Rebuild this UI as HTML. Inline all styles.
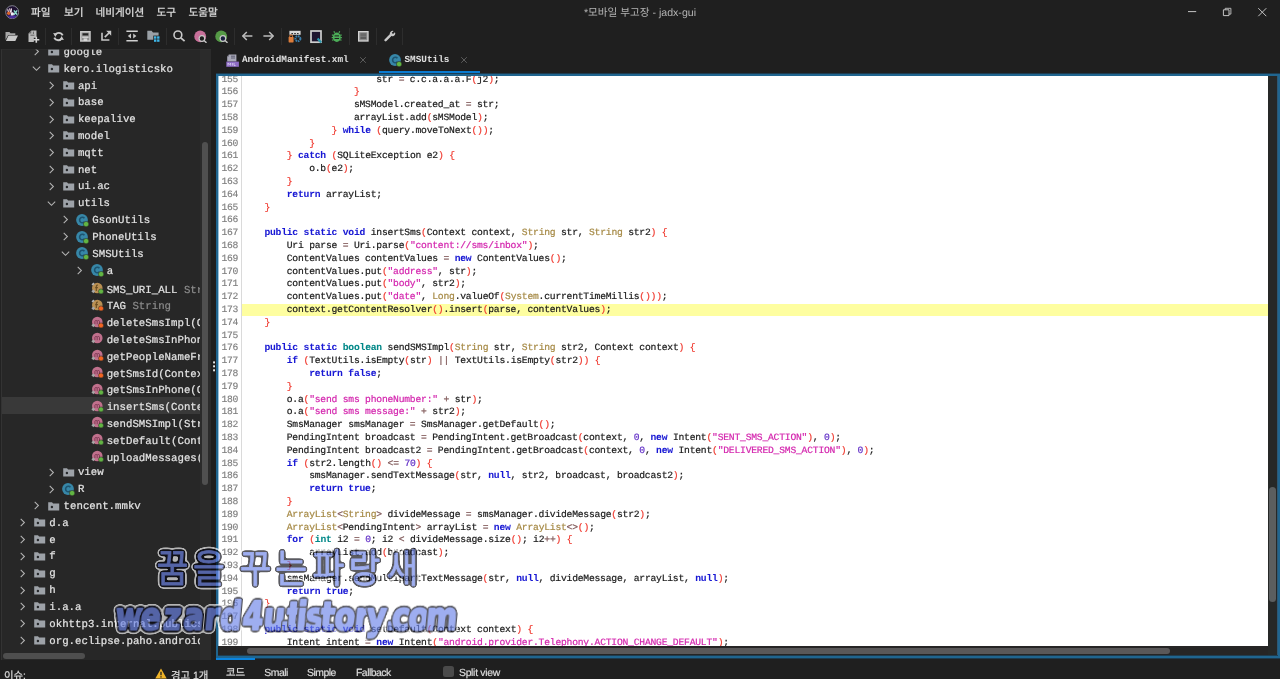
<!DOCTYPE html>
<html lang="ko"><head><meta charset="utf-8"><title>*모바일 부고장 - jadx-gui</title>
<style>
*{box-sizing:border-box}
html,body{margin:0;padding:0;width:1280px;height:679px;overflow:hidden;background:#1f1f1f}
body{position:relative;text-rendering:geometricPrecision;font-family:"Liberation Sans","Noto Sans CJK KR",sans-serif;color:#d4d4d4;-webkit-font-smoothing:antialiased}
.abs{position:absolute}
#menubar span{position:absolute;top:5px;height:16px;line-height:16px;font-size:10.6px;font-weight:500;color:#d4d4d4;white-space:nowrap;-webkit-text-stroke:0.15px #d4d4d4}
#title{position:absolute;left:0;width:1280px;top:5px;height:16px;line-height:16px;text-align:center;font-size:10.6px;color:#b4b4b4;white-space:nowrap}
.tsep{position:absolute;top:27.5px;width:1px;height:17px;background:#2d2d2d}
#tree{position:absolute;left:0;top:49px;width:200px;height:611px;background:#272727;overflow:hidden;border-left:1px solid #222}
#treesb{position:absolute;left:200px;top:49px;width:10.6px;height:611px;background:#2b2b2b}
.lb{position:absolute;white-space:pre;font-family:"Liberation Mono",monospace;font-size:10.72px;line-height:12px;height:12px;color:#e2e2e2;-webkit-text-stroke:0.22px #e2e2e2}
.lb .g{color:#8c8c8c;-webkit-text-stroke:0.2px #8c8c8c}
.sel{background:#393939}
#editor{position:absolute;left:216px;top:73.4px;width:1064px;height:583.5px;background:#1e6a9b}
#white{position:absolute;left:219px;top:76px;width:1049px;height:570px;background:#fff;overflow:hidden}
#gutline{position:absolute;left:241px;top:76px;width:1px;height:570px;background:#dadada}
.ln{position:absolute;left:218.5px;width:19.7px;text-align:right;font-family:"Liberation Mono",monospace;font-size:9.7px;letter-spacing:-0.219px;color:#7e7e7e;white-space:pre;-webkit-text-stroke:0.15px}
.cl{position:absolute;left:242.0px;white-space:pre;font-family:"Liberation Mono",monospace;font-size:9.7px;letter-spacing:-0.2186px;color:#1a1a1a;-webkit-text-stroke:0.2px}
.cl i{font-style:normal}
.cl b{font-weight:bold;-webkit-text-stroke:0.05px}
.k{color:#1818d4}.t{color:#008888}.c{color:#a68a46}.s{color:#d426ae}.n{color:#6432c8}.p{color:#f03c32}.o{color:#7d5555}
.tab{position:absolute;top:50px;height:20px;line-height:20px;font-family:"Liberation Mono",monospace;font-weight:bold;font-size:9.37px;color:#e0e0e0;white-space:pre}
.btab{position:absolute;top:665.4px;height:18px;line-height:18px;font-size:10.4px;color:#dcdcdc;white-space:nowrap;-webkit-text-stroke:0.2px #dcdcdc}
.lat{letter-spacing:-0.5px}
.wm{position:absolute;white-space:nowrap;pointer-events:none}
</style></head><body>
<div id="app" style="position:absolute;left:0;top:0;width:1280px;height:679px;overflow:hidden;will-change:transform">

<div id="titlebar" class="abs" style="left:0;top:0;width:1280px;height:26px;background:#1f1f1f"></div>
<svg class="abs" style="left:5px;top:4.700px" width="14.400" height="14.400" viewBox="0 0 14.400 14.400"><circle cx="7.200" cy="7.200" r="6.500" fill="#1d1030" stroke="#8e8e9c" stroke-width="0.900"/><path d="M2.300 10.600a5.600 5.600 0 0 0 9.800 0z" fill="#4a2f9e"/><path d="M2.600 4.200l1.300 3.800M4.600 3.300l.900 4.300M6.500 3.400l-.300 3.600" stroke="#f1dfe8" stroke-width="1.100" fill="none"/><circle cx="3.700" cy="8.300" r="1.700" fill="#e0662c"/><path d="M5.800 7.200h1.600a1.700 1.700 0 0 1 0 3.400H5.800z" fill="#f2ecf8"/><path d="M8.900 5.400l3.300 4.400M12.200 5.400l-3.300 4.400" stroke="#8fe0cf" stroke-width="1.400"/></svg>
<div id="menubar">
<span style="left:31px">파일</span>
<span style="left:64px">보기</span>
<span style="left:95.5px">네비게이션</span>
<span style="left:156.5px">도구</span>
<span style="left:188.5px">도움말</span>
</div>
<div id="title">*모바일 부고장 - jadx-gui</div>
<svg class="abs" style="left:1180px;top:0" width="100" height="26" viewBox="0 0 100 26"><path d="M8 11.600h8.200" stroke="#c4c4c4" stroke-width="1"/><path d="M43.400 9.800h5.600v5.800h-5.600z" fill="none" stroke="#c4c4c4" stroke-width="1"/><path d="M45.200 9.800v-1.500h5.700v5.800h-1.900" fill="none" stroke="#c4c4c4" stroke-width="0.900"/><path d="M78.300 8.200l8 8M86.300 8.200l-8 8" stroke="#c4c4c4" stroke-width="1"/></svg>
<div class="tsep" style="left:45.0px"></div>
<div class="tsep" style="left:70.9px"></div>
<div class="tsep" style="left:117.9px"></div>
<div class="tsep" style="left:166.0px"></div>
<div class="tsep" style="left:233.9px"></div>
<div class="tsep" style="left:280.9px"></div>
<div class="tsep" style="left:349.0px"></div>
<div class="tsep" style="left:375.5px"></div>
<div class="tsep" style="left:401.5px"></div>
<svg class="abs" style="left:5px;top:30px" width="14" height="12" viewBox="0 0 14 12"><path d="M0.5 2h4l1 1.300h4.800v1.600H3.200L0.500 10z" fill="#a8a8a8"/><path d="M3.500 5.600H13L10.300 11H0.900z" fill="#c8c8c8"/></svg>
<svg class="abs" style="left:27.5px;top:29.5px" width="12" height="14" viewBox="0 0 12 14"><path d="M3.500 0.500h5v7.200H5.800v4.200H0.500V3.600z" fill="#bcbcbc"/><path d="M3.300 0.700L0.700 3.400h2.600z" fill="#6a6a6a"/><path d="M5.400 1.600v2.400M2.400 5.200h4" stroke="#5a5a5a" stroke-width="0.900"/><path d="M8.300 6.800v6M5.300 9.800h6" stroke="#d4d4d4" stroke-width="1.600"/></svg>
<svg class="abs" style="left:53px;top:30.5px" width="11" height="11" viewBox="0 0 11 11"><path d="M9.700 4.300A4.300 4.300 0 0 0 2 4.300M1.300 6.700a4.300 4.300 0 0 0 7.700 .300" fill="none" stroke="#c8c8c8" stroke-width="1.900"/><path d="M0.100 2.100l4 .300-1.700 3.600z M10.900 8.900l-4-.300 1.700-3.600z" fill="#c8c8c8"/></svg>
<svg class="abs" style="left:79.5px;top:30.5px" width="11" height="11" viewBox="0 0 11 11"><path d="M0.800 0.700h9.200v9.300H0.800z" fill="#8c8c8c" stroke="#c8c8c8" stroke-width="1.500"/><path d="M2.600 2.300h5.600v2.100H2.600z" fill="#262626"/><path d="M3.600 7.400h3.600v2.600H3.600z" fill="#d6d6d6"/><path d="M2.200 5.400h6.400v1.600H2.200z" fill="#cfcfcf"/></svg>
<svg class="abs" style="left:100.5px;top:29.8px" width="11" height="11" viewBox="0 0 11 11"><path d="M1 2.800v7.200h7.400" fill="none" stroke="#c8c8c8" stroke-width="1.600"/><path d="M3.800 7.200L9 2" stroke="#c8c8c8" stroke-width="1.700"/><path d="M5.200 0.800h5v5z" fill="#c8c8c8"/></svg>
<svg class="abs" style="left:126px;top:30px" width="12.2" height="12" viewBox="0 0 12.2 12"><path d="M0.400 1.300h11.400M0.400 10.700h11.400" stroke="#d0d0d0" stroke-width="1.500"/><path d="M5 3.600v4.800L1.800 6z M7.200 3.600v4.800L10.400 6z" fill="#c8c8c8"/></svg>
<svg class="abs" style="left:147px;top:29.8px" width="13" height="13" viewBox="0 0 13 13"><path d="M0.300 0.800h4.300l1.400 1.800h5.600v7.200H0.300z" fill="#9aa0a6"/><rect x="6.300" y="5.600" width="6.600" height="6.800" fill="#1f1f1f"/><rect x="7" y="6.300" width="2.400" height="2.400" fill="#3fb6e8"/><rect x="10.100" y="6.300" width="2.400" height="2.400" fill="#3fb6e8"/><rect x="7" y="9.400" width="2.400" height="2.400" fill="#3fb6e8"/><rect x="10.100" y="9.400" width="2.400" height="2.400" fill="#3fb6e8"/></svg>
<svg class="abs" style="left:173px;top:30px" width="12.5" height="12.5" viewBox="0 0 12.5 12.5"><circle cx="4.900" cy="4.900" r="3.900" fill="none" stroke="#c8c8c8" stroke-width="1.600"/><path d="M7.800 7.800l3.800 3.400" stroke="#c8c8c8" stroke-width="1.800"/></svg>
<svg class="abs" style="left:194px;top:29.5px" width="13.5" height="13.5" viewBox="0 0 13.5 13.5"><circle cx="6.200" cy="6.400" r="5.900" fill="#c8709a"/><circle cx="7.900" cy="8.500" r="2.800" fill="#1f1f1f" stroke="#c8c8c8" stroke-width="1.200"/><path d="M10 10.500l2.500 2.300" stroke="#c8c8c8" stroke-width="1.400"/></svg>
<svg class="abs" style="left:215px;top:29.5px" width="13.5" height="13.5" viewBox="0 0 13.5 13.5"><circle cx="6.200" cy="6.400" r="5.900" fill="#559a46"/><circle cx="7.900" cy="8.500" r="2.800" fill="#1a2240" stroke="#c8c8c8" stroke-width="1.200"/><path d="M10 10.500l2.500 2.300" stroke="#c8c8c8" stroke-width="1.400"/></svg>
<svg class="abs" style="left:242px;top:31px" width="11" height="10" viewBox="0 0 11 10"><path d="M0.800 5h9.600" stroke="#bcbcbc" stroke-width="1.500"/><path d="M4.800 1L0.900 5l3.900 4" fill="none" stroke="#bcbcbc" stroke-width="1.500"/></svg>
<svg class="abs" style="left:262.5px;top:31px" width="11" height="10" viewBox="0 0 11 10"><path d="M0.400 5h9.600" stroke="#bcbcbc" stroke-width="1.500"/><path d="M6.200 1l3.900 4-3.900 4" fill="none" stroke="#bcbcbc" stroke-width="1.500"/></svg>
<svg class="abs" style="left:287.5px;top:30px" width="14" height="13" viewBox="0 0 14 13"><rect x="1.400" y="0.800" width="11.200" height="4" fill="#d8d8d8"/><path d="M3.400 3.600h1.600M6.200 3.600h1.600M9 3.600h1.600" stroke="#1f1f1f" stroke-width="1"/><rect x="0.600" y="7" width="5" height="5.400" rx="0.600" fill="#dc7c3a"/><path d="M1.700 7.400V6.200a1.400 1.400 0 0 1 2.800 0v1.200" fill="none" stroke="#dc7c3a" stroke-width="1"/><circle cx="9.900" cy="8.700" r="2.500" fill="none" stroke="#3a7fae" stroke-width="2" stroke-dasharray="1.600 0.700"/></svg>
<svg class="abs" style="left:309.5px;top:29.5px" width="13" height="14" viewBox="0 0 13 14"><rect x="1" y="1" width="10" height="11.200" fill="#1e1630" stroke="#cfcfcf" stroke-width="1.700"/><path d="M7.600 8.600l3.600 3.800" stroke="#2d9ab0" stroke-width="2.200"/></svg>
<svg class="abs" style="left:330.5px;top:30px" width="12" height="13" viewBox="0 0 12 13"><ellipse cx="5.800" cy="7.300" rx="4" ry="4.700" fill="#4cae58"/><path d="M3.600 2.800L2.900 1.200M8 2.800l.700-1.600M0.900 5.200h1.500M9.200 5.200h1.500M0.700 7.600h1.500M9.400 7.600h1.500M1.100 10.300l1.500-.600M10.500 10.300l-1.500-.600" stroke="#4cae58" stroke-width="1.200"/><path d="M3.600 5.900h4.400M3.600 8.500h4.400" stroke="#1f1f1f" stroke-width="1"/></svg>
<svg class="abs" style="left:357.5px;top:30.8px" width="11" height="11" viewBox="0 0 11 11"><rect x="0.600" y="0.600" width="9.400" height="9.400" fill="#8a8a8a" stroke="#d4d4d4" stroke-width="1.300"/><rect x="2.400" y="2.200" width="5.800" height="3.400" fill="#6a6a6a"/><path d="M2.400 7h5.800" stroke="#3a3a3a" stroke-width="1.100"/></svg>
<svg class="abs" style="left:383.5px;top:30px" width="12" height="12" viewBox="0 0 12 12"><path d="M1.600 10.200L6.600 5.200" stroke="#c8c8c8" stroke-width="2.400" stroke-linecap="round"/><path d="M10.900 2.200L9 4.100 7.700 2.800 9.600 0.900A3 3 0 0 0 5.900 4.600 3 3 0 0 0 9.600 6.100 3 3 0 0 0 10.900 2.200z" fill="#c8c8c8"/></svg>
<div id="tree">
<svg class="ch" style="position:absolute;left:31.2px;top:-1.72px" width="9" height="9" viewBox="0 0 9 9"><path d="M2.7 0.9L6.4 4.5 2.7 8.1" fill="none" stroke="#b4b4b4" stroke-width="1.05"/></svg><svg class="ic" style="position:absolute;left:47.3px;top:-1.62px" width="12" height="9" viewBox="0 0 12 9"><path d="M0.2 0.3h3.8l1.1 1.2h6.1v7.1H0.2z" fill="#9da2a8"/><circle cx="3.9" cy="5" r="1.2" fill="#26282b"/></svg><span class="lb" style="left:62.6px;top:-2.12px">google</span>
<svg class="ch" style="position:absolute;left:31.2px;top:15.10px" width="9" height="9" viewBox="0 0 9 9"><path d="M0.8 2.6L4.5 6.3 8.2 2.6" fill="none" stroke="#b4b4b4" stroke-width="1.05"/></svg><svg class="ic" style="position:absolute;left:47.3px;top:15.20px" width="12" height="9" viewBox="0 0 12 9"><path d="M0.2 0.3h3.8l1.1 1.2h6.1v7.1H0.2z" fill="#9da2a8"/><circle cx="3.9" cy="5" r="1.2" fill="#26282b"/></svg><span class="lb" style="left:62.6px;top:14.70px">kero.ilogisticsko</span>
<svg class="ch" style="position:absolute;left:45.5px;top:31.92px" width="9" height="9" viewBox="0 0 9 9"><path d="M2.7 0.9L6.4 4.5 2.7 8.1" fill="none" stroke="#b4b4b4" stroke-width="1.05"/></svg><svg class="ic" style="position:absolute;left:61.6px;top:32.02px" width="12" height="9" viewBox="0 0 12 9"><path d="M0.2 0.3h3.8l1.1 1.2h6.1v7.1H0.2z" fill="#9da2a8"/><circle cx="3.9" cy="5" r="1.2" fill="#26282b"/></svg><span class="lb" style="left:76.9px;top:31.52px">api</span>
<svg class="ch" style="position:absolute;left:45.5px;top:48.74px" width="9" height="9" viewBox="0 0 9 9"><path d="M2.7 0.9L6.4 4.5 2.7 8.1" fill="none" stroke="#b4b4b4" stroke-width="1.05"/></svg><svg class="ic" style="position:absolute;left:61.6px;top:48.84px" width="12" height="9" viewBox="0 0 12 9"><path d="M0.2 0.3h3.8l1.1 1.2h6.1v7.1H0.2z" fill="#9da2a8"/><circle cx="3.9" cy="5" r="1.2" fill="#26282b"/></svg><span class="lb" style="left:76.9px;top:48.34px">base</span>
<svg class="ch" style="position:absolute;left:45.5px;top:65.56px" width="9" height="9" viewBox="0 0 9 9"><path d="M2.7 0.9L6.4 4.5 2.7 8.1" fill="none" stroke="#b4b4b4" stroke-width="1.05"/></svg><svg class="ic" style="position:absolute;left:61.6px;top:65.66px" width="12" height="9" viewBox="0 0 12 9"><path d="M0.2 0.3h3.8l1.1 1.2h6.1v7.1H0.2z" fill="#9da2a8"/><circle cx="3.9" cy="5" r="1.2" fill="#26282b"/></svg><span class="lb" style="left:76.9px;top:65.16px">keepalive</span>
<svg class="ch" style="position:absolute;left:45.5px;top:82.38px" width="9" height="9" viewBox="0 0 9 9"><path d="M2.7 0.9L6.4 4.5 2.7 8.1" fill="none" stroke="#b4b4b4" stroke-width="1.05"/></svg><svg class="ic" style="position:absolute;left:61.6px;top:82.48px" width="12" height="9" viewBox="0 0 12 9"><path d="M0.2 0.3h3.8l1.1 1.2h6.1v7.1H0.2z" fill="#9da2a8"/><circle cx="3.9" cy="5" r="1.2" fill="#26282b"/></svg><span class="lb" style="left:76.9px;top:81.98px">model</span>
<svg class="ch" style="position:absolute;left:45.5px;top:99.20px" width="9" height="9" viewBox="0 0 9 9"><path d="M2.7 0.9L6.4 4.5 2.7 8.1" fill="none" stroke="#b4b4b4" stroke-width="1.05"/></svg><svg class="ic" style="position:absolute;left:61.6px;top:99.30px" width="12" height="9" viewBox="0 0 12 9"><path d="M0.2 0.3h3.8l1.1 1.2h6.1v7.1H0.2z" fill="#9da2a8"/><circle cx="3.9" cy="5" r="1.2" fill="#26282b"/></svg><span class="lb" style="left:76.9px;top:98.80px">mqtt</span>
<svg class="ch" style="position:absolute;left:45.5px;top:116.02px" width="9" height="9" viewBox="0 0 9 9"><path d="M2.7 0.9L6.4 4.5 2.7 8.1" fill="none" stroke="#b4b4b4" stroke-width="1.05"/></svg><svg class="ic" style="position:absolute;left:61.6px;top:116.12px" width="12" height="9" viewBox="0 0 12 9"><path d="M0.2 0.3h3.8l1.1 1.2h6.1v7.1H0.2z" fill="#9da2a8"/><circle cx="3.9" cy="5" r="1.2" fill="#26282b"/></svg><span class="lb" style="left:76.9px;top:115.62px">net</span>
<svg class="ch" style="position:absolute;left:45.5px;top:132.84px" width="9" height="9" viewBox="0 0 9 9"><path d="M2.7 0.9L6.4 4.5 2.7 8.1" fill="none" stroke="#b4b4b4" stroke-width="1.05"/></svg><svg class="ic" style="position:absolute;left:61.6px;top:132.94px" width="12" height="9" viewBox="0 0 12 9"><path d="M0.2 0.3h3.8l1.1 1.2h6.1v7.1H0.2z" fill="#9da2a8"/><circle cx="3.9" cy="5" r="1.2" fill="#26282b"/></svg><span class="lb" style="left:76.9px;top:132.44px">ui.ac</span>
<svg class="ch" style="position:absolute;left:45.5px;top:149.66px" width="9" height="9" viewBox="0 0 9 9"><path d="M0.8 2.6L4.5 6.3 8.2 2.6" fill="none" stroke="#b4b4b4" stroke-width="1.05"/></svg><svg class="ic" style="position:absolute;left:61.6px;top:149.76px" width="12" height="9" viewBox="0 0 12 9"><path d="M0.2 0.3h3.8l1.1 1.2h6.1v7.1H0.2z" fill="#9da2a8"/><circle cx="3.9" cy="5" r="1.2" fill="#26282b"/></svg><span class="lb" style="left:76.9px;top:149.26px">utils</span>
<svg class="ch" style="position:absolute;left:59.9px;top:166.48px" width="9" height="9" viewBox="0 0 9 9"><path d="M2.7 0.9L6.4 4.5 2.7 8.1" fill="none" stroke="#b4b4b4" stroke-width="1.05"/></svg><svg class="ic" style="position:absolute;left:75.3px;top:164.78px" width="13" height="13" viewBox="0 0 13 13"><circle cx="6" cy="6" r="5.900" fill="#3787a8"/><path d="M8.4 4.3A2.7 2.7 0 1 0 8.4 7.7" fill="none" stroke="#1d5470" stroke-width="1.6"/><circle cx="10.1" cy="10.1" r="2.7" fill="#62b543" stroke="#272727" stroke-width="0.5"/></svg><span class="lb" style="left:91.3px;top:166.08px">GsonUtils</span>
<svg class="ch" style="position:absolute;left:59.9px;top:183.30px" width="9" height="9" viewBox="0 0 9 9"><path d="M2.7 0.9L6.4 4.5 2.7 8.1" fill="none" stroke="#b4b4b4" stroke-width="1.05"/></svg><svg class="ic" style="position:absolute;left:75.3px;top:181.60px" width="13" height="13" viewBox="0 0 13 13"><circle cx="6" cy="6" r="5.900" fill="#3787a8"/><path d="M8.4 4.3A2.7 2.7 0 1 0 8.4 7.7" fill="none" stroke="#1d5470" stroke-width="1.6"/><circle cx="10.1" cy="10.1" r="2.7" fill="#62b543" stroke="#272727" stroke-width="0.5"/></svg><span class="lb" style="left:91.3px;top:182.90px">PhoneUtils</span>
<svg class="ch" style="position:absolute;left:59.9px;top:200.12px" width="9" height="9" viewBox="0 0 9 9"><path d="M0.8 2.6L4.5 6.3 8.2 2.6" fill="none" stroke="#b4b4b4" stroke-width="1.05"/></svg><svg class="ic" style="position:absolute;left:75.3px;top:198.42px" width="13" height="13" viewBox="0 0 13 13"><circle cx="6" cy="6" r="5.900" fill="#3787a8"/><path d="M8.4 4.3A2.7 2.7 0 1 0 8.4 7.7" fill="none" stroke="#1d5470" stroke-width="1.6"/><circle cx="10.1" cy="10.1" r="2.7" fill="#62b543" stroke="#272727" stroke-width="0.5"/></svg><span class="lb" style="left:91.3px;top:199.72px">SMSUtils</span>
<svg class="ch" style="position:absolute;left:74.3px;top:216.94px" width="9" height="9" viewBox="0 0 9 9"><path d="M2.7 0.9L6.4 4.5 2.7 8.1" fill="none" stroke="#b4b4b4" stroke-width="1.05"/></svg><svg class="ic" style="position:absolute;left:89.7px;top:215.24px" width="13" height="13" viewBox="0 0 13 13"><circle cx="6" cy="6" r="5.900" fill="#3787a8"/><path d="M8.4 4.3A2.7 2.7 0 1 0 8.4 7.7" fill="none" stroke="#1d5470" stroke-width="1.6"/><circle cx="10.1" cy="10.1" r="2.7" fill="#62b543" stroke="#272727" stroke-width="0.5"/></svg><span class="lb" style="left:105.7px;top:216.54px">a</span>
<svg class="ic" style="position:absolute;left:89.7px;top:232.86px" width="13" height="13" viewBox="0 0 13 13"><circle cx="6.3" cy="6" r="5.3" fill="#b98f52"/><path d="M6.9 3.2c-1.1-.2-1.6.3-1.6 1.3v4.6M4.2 5.6h2.7" fill="none" stroke="#6a4d22" stroke-width="1.1"/><path d="M0.5 2.2l2-1.7 1.2 1.4-2 1.7z" fill="#b8b8b8"/><path d="M2.300 7.400l1.900 1.900-1.900 1.900-1.900-1.900z" fill="#a8a8a8"/><circle cx="10" cy="9.400" r="2.500" fill="#62b543" stroke="#272727" stroke-width="0.500"/></svg><span class="lb" style="left:105.7px;top:235.56px">SMS_URI_ALL<span class="g"> Str</span></span>
<svg class="ic" style="position:absolute;left:89.7px;top:249.68px" width="13" height="13" viewBox="0 0 13 13"><circle cx="6.3" cy="6" r="5.3" fill="#b98f52"/><path d="M6.9 3.2c-1.1-.2-1.6.3-1.6 1.3v4.6M4.2 5.6h2.7" fill="none" stroke="#6a4d22" stroke-width="1.1"/><path d="M0.5 2.2l2-1.7 1.2 1.4-2 1.7z" fill="#b8b8b8"/><path d="M2.300 7.400l1.900 1.900-1.900 1.900-1.900-1.900z" fill="#a8a8a8"/><circle cx="10" cy="9.400" r="2.500" fill="#f26522" stroke="#272727" stroke-width="0.500"/></svg><span class="lb" style="left:105.7px;top:252.38px">TAG<span class="g"> String</span></span>
<svg class="ic" style="position:absolute;left:89.7px;top:266.50px" width="13" height="13" viewBox="0 0 13 13"><circle cx="6.3" cy="6" r="5.3" fill="#c0708c"/><path d="M3.9 8.2V5.3c0-1.1 2.3-1.1 2.3 0v2.9M6.2 5.3c0-1.1 2.3-1.1 2.3 0v2.9" fill="none" stroke="#7a3550" stroke-width="0.9"/><path d="M2.300 7.400l1.900 1.900-1.900 1.900-1.900-1.900z" fill="#a8a8a8"/><circle cx="10" cy="9.400" r="2.500" fill="#f26522" stroke="#272727" stroke-width="0.500"/></svg><span class="lb" style="left:105.7px;top:269.20px">deleteSmsImpl(C</span>
<svg class="ic" style="position:absolute;left:89.7px;top:283.32px" width="13" height="13" viewBox="0 0 13 13"><circle cx="6.3" cy="6" r="5.3" fill="#c0708c"/><path d="M3.9 8.2V5.3c0-1.1 2.3-1.1 2.3 0v2.9M6.2 5.3c0-1.1 2.3-1.1 2.3 0v2.9" fill="none" stroke="#7a3550" stroke-width="0.9"/><path d="M2.300 7.400l1.900 1.900-1.900 1.900-1.900-1.900z" fill="#a8a8a8"/></svg><span class="lb" style="left:105.7px;top:286.02px">deleteSmsInPhon</span>
<svg class="ic" style="position:absolute;left:89.7px;top:300.14px" width="13" height="13" viewBox="0 0 13 13"><circle cx="6.3" cy="6" r="5.3" fill="#c0708c"/><path d="M3.9 8.2V5.3c0-1.1 2.3-1.1 2.3 0v2.9M6.2 5.3c0-1.1 2.3-1.1 2.3 0v2.9" fill="none" stroke="#7a3550" stroke-width="0.9"/><path d="M2.300 7.400l1.900 1.900-1.900 1.900-1.900-1.900z" fill="#a8a8a8"/><circle cx="10" cy="9.400" r="2.500" fill="#f26522" stroke="#272727" stroke-width="0.500"/></svg><span class="lb" style="left:105.7px;top:302.84px">getPeopleNameFr</span>
<svg class="ic" style="position:absolute;left:89.7px;top:316.96px" width="13" height="13" viewBox="0 0 13 13"><circle cx="6.3" cy="6" r="5.3" fill="#c0708c"/><path d="M3.9 8.2V5.3c0-1.1 2.3-1.1 2.3 0v2.9M6.2 5.3c0-1.1 2.3-1.1 2.3 0v2.9" fill="none" stroke="#7a3550" stroke-width="0.9"/><path d="M2.300 7.400l1.900 1.900-1.900 1.900-1.900-1.900z" fill="#a8a8a8"/><circle cx="10" cy="9.400" r="2.500" fill="#f26522" stroke="#272727" stroke-width="0.500"/></svg><span class="lb" style="left:105.7px;top:319.66px">getSmsId(Contex</span>
<svg class="ic" style="position:absolute;left:89.7px;top:333.78px" width="13" height="13" viewBox="0 0 13 13"><circle cx="6.3" cy="6" r="5.3" fill="#c0708c"/><path d="M3.9 8.2V5.3c0-1.1 2.3-1.1 2.3 0v2.9M6.2 5.3c0-1.1 2.3-1.1 2.3 0v2.9" fill="none" stroke="#7a3550" stroke-width="0.9"/><path d="M2.300 7.400l1.900 1.900-1.900 1.900-1.900-1.900z" fill="#a8a8a8"/><circle cx="10" cy="9.400" r="2.500" fill="#62b543" stroke="#272727" stroke-width="0.500"/></svg><span class="lb" style="left:105.7px;top:336.48px">getSmsInPhone(C</span>
<div class="sel" style="position:absolute;left:1px;top:348.20px;width:199px;height:16.8px"></div>
<svg class="ic" style="position:absolute;left:89.7px;top:350.60px" width="13" height="13" viewBox="0 0 13 13"><circle cx="6.3" cy="6" r="5.3" fill="#c0708c"/><path d="M3.9 8.2V5.3c0-1.1 2.3-1.1 2.3 0v2.9M6.2 5.3c0-1.1 2.3-1.1 2.3 0v2.9" fill="none" stroke="#7a3550" stroke-width="0.9"/><path d="M2.300 7.400l1.900 1.900-1.900 1.900-1.900-1.900z" fill="#a8a8a8"/><circle cx="10" cy="9.400" r="2.500" fill="#62b543" stroke="#272727" stroke-width="0.500"/></svg><span class="lb" style="left:105.7px;top:353.30px">insertSms(Conte</span>
<svg class="ic" style="position:absolute;left:89.7px;top:367.42px" width="13" height="13" viewBox="0 0 13 13"><circle cx="6.3" cy="6" r="5.3" fill="#c0708c"/><path d="M3.9 8.2V5.3c0-1.1 2.3-1.1 2.3 0v2.9M6.2 5.3c0-1.1 2.3-1.1 2.3 0v2.9" fill="none" stroke="#7a3550" stroke-width="0.9"/><path d="M2.300 7.400l1.900 1.900-1.900 1.900-1.900-1.900z" fill="#a8a8a8"/><circle cx="10" cy="9.400" r="2.500" fill="#62b543" stroke="#272727" stroke-width="0.500"/></svg><span class="lb" style="left:105.7px;top:370.12px">sendSMSImpl(Str</span>
<svg class="ic" style="position:absolute;left:89.7px;top:384.24px" width="13" height="13" viewBox="0 0 13 13"><circle cx="6.3" cy="6" r="5.3" fill="#c0708c"/><path d="M3.9 8.2V5.3c0-1.1 2.3-1.1 2.3 0v2.9M6.2 5.3c0-1.1 2.3-1.1 2.3 0v2.9" fill="none" stroke="#7a3550" stroke-width="0.9"/><path d="M2.300 7.400l1.900 1.900-1.900 1.900-1.900-1.900z" fill="#a8a8a8"/><circle cx="10" cy="9.400" r="2.500" fill="#62b543" stroke="#272727" stroke-width="0.500"/></svg><span class="lb" style="left:105.7px;top:386.94px">setDefault(Cont</span>
<svg class="ic" style="position:absolute;left:89.7px;top:401.06px" width="13" height="13" viewBox="0 0 13 13"><circle cx="6.3" cy="6" r="5.3" fill="#c0708c"/><path d="M3.9 8.2V5.3c0-1.1 2.3-1.1 2.3 0v2.9M6.2 5.3c0-1.1 2.3-1.1 2.3 0v2.9" fill="none" stroke="#7a3550" stroke-width="0.9"/><path d="M2.300 7.400l1.900 1.900-1.900 1.900-1.900-1.900z" fill="#a8a8a8"/><circle cx="10" cy="9.400" r="2.500" fill="#62b543" stroke="#272727" stroke-width="0.500"/></svg><span class="lb" style="left:105.7px;top:403.76px">uploadMessages(</span>
<svg class="ch" style="position:absolute;left:45.5px;top:418.78px" width="9" height="9" viewBox="0 0 9 9"><path d="M2.7 0.9L6.4 4.5 2.7 8.1" fill="none" stroke="#b4b4b4" stroke-width="1.05"/></svg><svg class="ic" style="position:absolute;left:61.6px;top:418.88px" width="12" height="9" viewBox="0 0 12 9"><path d="M0.2 0.3h3.8l1.1 1.2h6.1v7.1H0.2z" fill="#9da2a8"/><circle cx="3.9" cy="5" r="1.2" fill="#26282b"/></svg><span class="lb" style="left:76.9px;top:418.38px">view</span>
<svg class="ch" style="position:absolute;left:45.5px;top:435.60px" width="9" height="9" viewBox="0 0 9 9"><path d="M2.7 0.9L6.4 4.5 2.7 8.1" fill="none" stroke="#b4b4b4" stroke-width="1.05"/></svg><svg class="ic" style="position:absolute;left:60.9px;top:433.90px" width="13" height="13" viewBox="0 0 13 13"><circle cx="6" cy="6" r="5.900" fill="#3787a8"/><path d="M8.4 4.3A2.7 2.7 0 1 0 8.4 7.7" fill="none" stroke="#1d5470" stroke-width="1.6"/><circle cx="10.1" cy="10.1" r="2.7" fill="#62b543" stroke="#272727" stroke-width="0.5"/></svg><span class="lb" style="left:76.9px;top:435.20px">R</span>
<svg class="ch" style="position:absolute;left:31.2px;top:452.42px" width="9" height="9" viewBox="0 0 9 9"><path d="M2.7 0.9L6.4 4.5 2.7 8.1" fill="none" stroke="#b4b4b4" stroke-width="1.05"/></svg><svg class="ic" style="position:absolute;left:47.3px;top:452.52px" width="12" height="9" viewBox="0 0 12 9"><path d="M0.2 0.3h3.8l1.1 1.2h6.1v7.1H0.2z" fill="#9da2a8"/><circle cx="3.9" cy="5" r="1.2" fill="#26282b"/></svg><span class="lb" style="left:62.6px;top:452.02px">tencent.mmkv</span>
<svg class="ch" style="position:absolute;left:16.9px;top:469.24px" width="9" height="9" viewBox="0 0 9 9"><path d="M2.7 0.9L6.4 4.5 2.7 8.1" fill="none" stroke="#b4b4b4" stroke-width="1.05"/></svg><svg class="ic" style="position:absolute;left:33.0px;top:469.34px" width="12" height="9" viewBox="0 0 12 9"><path d="M0.2 0.3h3.8l1.1 1.2h6.1v7.1H0.2z" fill="#9da2a8"/><circle cx="3.9" cy="5" r="1.2" fill="#26282b"/></svg><span class="lb" style="left:48.3px;top:468.84px">d.a</span>
<svg class="ch" style="position:absolute;left:16.9px;top:486.06px" width="9" height="9" viewBox="0 0 9 9"><path d="M2.7 0.9L6.4 4.5 2.7 8.1" fill="none" stroke="#b4b4b4" stroke-width="1.05"/></svg><svg class="ic" style="position:absolute;left:33.0px;top:486.16px" width="12" height="9" viewBox="0 0 12 9"><path d="M0.2 0.3h3.8l1.1 1.2h6.1v7.1H0.2z" fill="#9da2a8"/><circle cx="3.9" cy="5" r="1.2" fill="#26282b"/></svg><span class="lb" style="left:48.3px;top:485.66px">e</span>
<svg class="ch" style="position:absolute;left:16.9px;top:502.88px" width="9" height="9" viewBox="0 0 9 9"><path d="M2.7 0.9L6.4 4.5 2.7 8.1" fill="none" stroke="#b4b4b4" stroke-width="1.05"/></svg><svg class="ic" style="position:absolute;left:33.0px;top:502.98px" width="12" height="9" viewBox="0 0 12 9"><path d="M0.2 0.3h3.8l1.1 1.2h6.1v7.1H0.2z" fill="#9da2a8"/><circle cx="3.9" cy="5" r="1.2" fill="#26282b"/></svg><span class="lb" style="left:48.3px;top:502.48px">f</span>
<svg class="ch" style="position:absolute;left:16.9px;top:519.70px" width="9" height="9" viewBox="0 0 9 9"><path d="M2.7 0.9L6.4 4.5 2.7 8.1" fill="none" stroke="#b4b4b4" stroke-width="1.05"/></svg><svg class="ic" style="position:absolute;left:33.0px;top:519.80px" width="12" height="9" viewBox="0 0 12 9"><path d="M0.2 0.3h3.8l1.1 1.2h6.1v7.1H0.2z" fill="#9da2a8"/><circle cx="3.9" cy="5" r="1.2" fill="#26282b"/></svg><span class="lb" style="left:48.3px;top:519.30px">g</span>
<svg class="ch" style="position:absolute;left:16.9px;top:536.52px" width="9" height="9" viewBox="0 0 9 9"><path d="M2.7 0.9L6.4 4.5 2.7 8.1" fill="none" stroke="#b4b4b4" stroke-width="1.05"/></svg><svg class="ic" style="position:absolute;left:33.0px;top:536.62px" width="12" height="9" viewBox="0 0 12 9"><path d="M0.2 0.3h3.8l1.1 1.2h6.1v7.1H0.2z" fill="#9da2a8"/><circle cx="3.9" cy="5" r="1.2" fill="#26282b"/></svg><span class="lb" style="left:48.3px;top:536.12px">h</span>
<svg class="ch" style="position:absolute;left:16.9px;top:553.34px" width="9" height="9" viewBox="0 0 9 9"><path d="M2.7 0.9L6.4 4.5 2.7 8.1" fill="none" stroke="#b4b4b4" stroke-width="1.05"/></svg><svg class="ic" style="position:absolute;left:33.0px;top:553.44px" width="12" height="9" viewBox="0 0 12 9"><path d="M0.2 0.3h3.8l1.1 1.2h6.1v7.1H0.2z" fill="#9da2a8"/><circle cx="3.9" cy="5" r="1.2" fill="#26282b"/></svg><span class="lb" style="left:48.3px;top:552.94px">i.a.a</span>
<svg class="ch" style="position:absolute;left:16.9px;top:570.16px" width="9" height="9" viewBox="0 0 9 9"><path d="M2.7 0.9L6.4 4.5 2.7 8.1" fill="none" stroke="#b4b4b4" stroke-width="1.05"/></svg><svg class="ic" style="position:absolute;left:33.0px;top:570.26px" width="12" height="9" viewBox="0 0 12 9"><path d="M0.2 0.3h3.8l1.1 1.2h6.1v7.1H0.2z" fill="#9da2a8"/><circle cx="3.9" cy="5" r="1.2" fill="#26282b"/></svg><span class="lb" style="left:48.3px;top:569.76px">okhttp3.internal.publics</span>
<svg class="ch" style="position:absolute;left:16.9px;top:586.98px" width="9" height="9" viewBox="0 0 9 9"><path d="M2.7 0.9L6.4 4.5 2.7 8.1" fill="none" stroke="#b4b4b4" stroke-width="1.05"/></svg><svg class="ic" style="position:absolute;left:33.0px;top:587.08px" width="12" height="9" viewBox="0 0 12 9"><path d="M0.2 0.3h3.8l1.1 1.2h6.1v7.1H0.2z" fill="#9da2a8"/><circle cx="3.9" cy="5" r="1.2" fill="#26282b"/></svg><span class="lb" style="left:48.3px;top:586.58px">org.eclipse.paho.android</span>
</div>
<div id="treesb"></div>
<div class="abs" style="left:202px;top:142px;width:6px;height:342.700px;border-radius:3px;background:#505050"></div>
<div class="abs" style="left:1px;top:650px;width:199px;height:10px;background:#272727"></div>
<div class="abs" style="left:1px;top:49px;width:1px;height:611px;background:#333"></div>
<div class="abs" style="left:1px;top:49px;width:210px;height:1px;background:#2e2e2e;opacity:.6"></div>
<div class="abs" style="left:3px;top:652.7px;width:82px;height:6.2px;border-radius:3.1px;background:#4e4e4e"></div>
<svg class="abs" style="left:211px;top:358px" width="6" height="16" viewBox="0 0 6 16"><rect x="2.100" y="3.400" width="1.900" height="2" fill="#ececec"/><rect x="2.100" y="7.300" width="1.900" height="2" fill="#ececec"/><rect x="2.100" y="11.300" width="1.900" height="2" fill="#ececec"/></svg>
<svg class="abs" style="left:226px;top:53.5px" width="14" height="14" viewBox="0 0 14 14"><path d="M3 0.6h7.4v7H1.2V2.6z" fill="#a9a9b8"/><path d="M3 0.6L1.2 2.600H3z" fill="#6c6c7c"/><path d="M5 2.200h4M5 4h4" stroke="#55556a" stroke-width="0.9"/><rect x="0.3" y="7.6" width="12.6" height="5.200" fill="#8d6bc4"/><path d="M2 9v2.600M2 9l1.300 1.600L4.600 9v2.600M6.400 9v2.600M8 9v2.600h1.600" stroke="#d9cff0" stroke-width="0.8" fill="none"/></svg>
<div class="tab" style="left:242px">AndroidManifest.xml</div>
<svg class="abs" style="left:358.900px;top:56px" width="8" height="8" viewBox="0 0 8 8"><path d="M1.200 1.200l5.600 5.600M6.800 1.200L1.200 6.800" stroke="#5c5c5c" stroke-width="1"/></svg>
<svg class="abs" style="left:388.500px;top:53.700px" width="13" height="13" viewBox="0 0 13 13"><circle cx="6" cy="6" r="5.900" fill="#3787a8"/><path d="M8.4 4.3A2.7 2.7 0 1 0 8.4 7.7" fill="none" stroke="#1d5470" stroke-width="1.6"/><circle cx="10.1" cy="10.1" r="2.7" fill="#62b543" stroke="#1f1f1f" stroke-width="0.5"/></svg>
<div class="tab" style="left:404.5px">SMSUtils</div>
<svg class="abs" style="left:459.600px;top:56px" width="8" height="8" viewBox="0 0 8 8"><path d="M1.200 1.200l5.600 5.600M6.800 1.200L1.200 6.800" stroke="#5c5c5c" stroke-width="1"/></svg>
<div class="abs" style="left:378.8px;top:70.7px;width:101px;height:3px;background:#0a7bd0"></div>
<div class="abs" style="left:216px;top:73px;width:1064px;height:1px;background:#1d3c50"></div>
<div class="abs" style="left:216px;top:74px;width:1064px;height:584px;background:#20658f"></div>
<div class="abs" style="left:216px;top:658px;width:1064px;height:1px;background:#1d3a4e"></div>
<div class="abs" style="left:218px;top:76px;width:1px;height:579px;background:#9cc3db"></div>
<div id="white"></div>
<div class="abs" style="left:242px;top:304px;width:1026px;height:12px;background:#fefea0"></div>
<div id="gutline"></div>
<div class="abs" style="left:0;top:76px;width:1268px;height:570px;overflow:hidden">
<div class="ln" style="top:-2.45px;height:12.8px;line-height:12.8px">155</div>
<div class="cl" style="top:-2.45px;height:12.8px;line-height:12.8px">                        str <i class="o">=</i> c.c.a.a.a.F<i class="p">(</i>j2<i class="p">)</i>;</div>
<div class="ln" style="top:10.35px;height:12.8px;line-height:12.8px">156</div>
<div class="cl" style="top:10.35px;height:12.8px;line-height:12.8px">                    <i class="p">}</i></div>
<div class="ln" style="top:23.15px;height:12.8px;line-height:12.8px">157</div>
<div class="cl" style="top:23.15px;height:12.8px;line-height:12.8px">                    sMSModel.created_at <i class="o">=</i> str;</div>
<div class="ln" style="top:35.95px;height:12.8px;line-height:12.8px">158</div>
<div class="cl" style="top:35.95px;height:12.8px;line-height:12.8px">                    arrayList.add<i class="p">(</i>sMSModel<i class="p">)</i>;</div>
<div class="ln" style="top:48.75px;height:12.8px;line-height:12.8px">159</div>
<div class="cl" style="top:48.75px;height:12.8px;line-height:12.8px">                <i class="p">}</i> <b class="k">while</b> <i class="p">(</i>query.moveToNext<i class="p">(</i><i class="p">)</i><i class="p">)</i>;</div>
<div class="ln" style="top:61.55px;height:12.8px;line-height:12.8px">160</div>
<div class="cl" style="top:61.55px;height:12.8px;line-height:12.8px">            <i class="p">}</i></div>
<div class="ln" style="top:74.35px;height:12.8px;line-height:12.8px">161</div>
<div class="cl" style="top:74.35px;height:12.8px;line-height:12.8px">        <i class="p">}</i> <b class="k">catch</b> <i class="p">(</i>SQLiteException e2<i class="p">)</i> <i class="p">{</i></div>
<div class="ln" style="top:87.15px;height:12.8px;line-height:12.8px">162</div>
<div class="cl" style="top:87.15px;height:12.8px;line-height:12.8px">            o.b<i class="p">(</i>e2<i class="p">)</i>;</div>
<div class="ln" style="top:99.95px;height:12.8px;line-height:12.8px">163</div>
<div class="cl" style="top:99.95px;height:12.8px;line-height:12.8px">        <i class="p">}</i></div>
<div class="ln" style="top:112.75px;height:12.8px;line-height:12.8px">164</div>
<div class="cl" style="top:112.75px;height:12.8px;line-height:12.8px">        <b class="k">return</b> arrayList;</div>
<div class="ln" style="top:125.55px;height:12.8px;line-height:12.8px">165</div>
<div class="cl" style="top:125.55px;height:12.8px;line-height:12.8px">    <i class="p">}</i></div>
<div class="ln" style="top:138.35px;height:12.8px;line-height:12.8px">166</div>
<div class="ln" style="top:151.15px;height:12.8px;line-height:12.8px">167</div>
<div class="cl" style="top:151.15px;height:12.8px;line-height:12.8px">    <b class="k">public</b> <b class="k">static</b> <b class="k">void</b> insertSms<i class="p">(</i>Context context, <i class="c">String</i> str, <i class="c">String</i> str2<i class="p">)</i> <i class="p">{</i></div>
<div class="ln" style="top:163.95px;height:12.8px;line-height:12.8px">168</div>
<div class="cl" style="top:163.95px;height:12.8px;line-height:12.8px">        Uri parse <i class="o">=</i> Uri.parse<i class="p">(</i><i class="s">"content://sms/inbox"</i><i class="p">)</i>;</div>
<div class="ln" style="top:176.75px;height:12.8px;line-height:12.8px">169</div>
<div class="cl" style="top:176.75px;height:12.8px;line-height:12.8px">        ContentValues contentValues <i class="o">=</i> <b class="k">new</b> ContentValues<i class="p">(</i><i class="p">)</i>;</div>
<div class="ln" style="top:189.55px;height:12.8px;line-height:12.8px">170</div>
<div class="cl" style="top:189.55px;height:12.8px;line-height:12.8px">        contentValues.put<i class="p">(</i><i class="s">"address"</i>, str<i class="p">)</i>;</div>
<div class="ln" style="top:202.35px;height:12.8px;line-height:12.8px">171</div>
<div class="cl" style="top:202.35px;height:12.8px;line-height:12.8px">        contentValues.put<i class="p">(</i><i class="s">"body"</i>, str2<i class="p">)</i>;</div>
<div class="ln" style="top:215.15px;height:12.8px;line-height:12.8px">172</div>
<div class="cl" style="top:215.15px;height:12.8px;line-height:12.8px">        contentValues.put<i class="p">(</i><i class="s">"date"</i>, <i class="c">Long</i>.valueOf<i class="p">(</i><i class="c">System</i>.currentTimeMillis<i class="p">(</i><i class="p">)</i><i class="p">)</i><i class="p">)</i>;</div>
<div class="ln" style="top:227.95px;height:12.8px;line-height:12.8px">173</div>
<div class="cl" style="top:227.95px;height:12.8px;line-height:12.8px">        context.getContentResolver<i class="p">(</i><i class="p">)</i>.insert<i class="p">(</i>parse, contentValues<i class="p">)</i>;</div>
<div class="ln" style="top:240.75px;height:12.8px;line-height:12.8px">174</div>
<div class="cl" style="top:240.75px;height:12.8px;line-height:12.8px">    <i class="p">}</i></div>
<div class="ln" style="top:253.55px;height:12.8px;line-height:12.8px">175</div>
<div class="ln" style="top:266.35px;height:12.8px;line-height:12.8px">176</div>
<div class="cl" style="top:266.35px;height:12.8px;line-height:12.8px">    <b class="k">public</b> <b class="k">static</b> <b class="t">boolean</b> sendSMSImpl<i class="p">(</i><i class="c">String</i> str, <i class="c">String</i> str2, Context context<i class="p">)</i> <i class="p">{</i></div>
<div class="ln" style="top:279.15px;height:12.8px;line-height:12.8px">177</div>
<div class="cl" style="top:279.15px;height:12.8px;line-height:12.8px">        <b class="k">if</b> <i class="p">(</i>TextUtils.isEmpty<i class="p">(</i>str<i class="p">)</i> <i class="o">||</i> TextUtils.isEmpty<i class="p">(</i>str2<i class="p">)</i><i class="p">)</i> <i class="p">{</i></div>
<div class="ln" style="top:291.95px;height:12.8px;line-height:12.8px">178</div>
<div class="cl" style="top:291.95px;height:12.8px;line-height:12.8px">            <b class="k">return</b> <b class="k">false</b>;</div>
<div class="ln" style="top:304.75px;height:12.8px;line-height:12.8px">179</div>
<div class="cl" style="top:304.75px;height:12.8px;line-height:12.8px">        <i class="p">}</i></div>
<div class="ln" style="top:317.55px;height:12.8px;line-height:12.8px">180</div>
<div class="cl" style="top:317.55px;height:12.8px;line-height:12.8px">        o.a<i class="p">(</i><i class="s">"send sms phoneNumber:"</i> <i class="o">+</i> str<i class="p">)</i>;</div>
<div class="ln" style="top:330.35px;height:12.8px;line-height:12.8px">181</div>
<div class="cl" style="top:330.35px;height:12.8px;line-height:12.8px">        o.a<i class="p">(</i><i class="s">"send sms message:"</i> <i class="o">+</i> str2<i class="p">)</i>;</div>
<div class="ln" style="top:343.15px;height:12.8px;line-height:12.8px">182</div>
<div class="cl" style="top:343.15px;height:12.8px;line-height:12.8px">        SmsManager smsManager <i class="o">=</i> SmsManager.getDefault<i class="p">(</i><i class="p">)</i>;</div>
<div class="ln" style="top:355.95px;height:12.8px;line-height:12.8px">183</div>
<div class="cl" style="top:355.95px;height:12.8px;line-height:12.8px">        PendingIntent broadcast <i class="o">=</i> PendingIntent.getBroadcast<i class="p">(</i>context, <i class="n">0</i>, <b class="k">new</b> Intent<i class="p">(</i><i class="s">"SENT_SMS_ACTION"</i><i class="p">)</i>, <i class="n">0</i><i class="p">)</i>;</div>
<div class="ln" style="top:368.75px;height:12.8px;line-height:12.8px">184</div>
<div class="cl" style="top:368.75px;height:12.8px;line-height:12.8px">        PendingIntent broadcast2 <i class="o">=</i> PendingIntent.getBroadcast<i class="p">(</i>context, <i class="n">0</i>, <b class="k">new</b> Intent<i class="p">(</i><i class="s">"DELIVERED_SMS_ACTION"</i><i class="p">)</i>, <i class="n">0</i><i class="p">)</i>;</div>
<div class="ln" style="top:381.55px;height:12.8px;line-height:12.8px">185</div>
<div class="cl" style="top:381.55px;height:12.8px;line-height:12.8px">        <b class="k">if</b> <i class="p">(</i>str2.length<i class="p">(</i><i class="p">)</i> <i class="o">&lt;=</i> <i class="n">70</i><i class="p">)</i> <i class="p">{</i></div>
<div class="ln" style="top:394.35px;height:12.8px;line-height:12.8px">186</div>
<div class="cl" style="top:394.35px;height:12.8px;line-height:12.8px">            smsManager.sendTextMessage<i class="p">(</i>str, <b class="k">null</b>, str2, broadcast, broadcast2<i class="p">)</i>;</div>
<div class="ln" style="top:407.15px;height:12.8px;line-height:12.8px">187</div>
<div class="cl" style="top:407.15px;height:12.8px;line-height:12.8px">            <b class="k">return</b> <b class="k">true</b>;</div>
<div class="ln" style="top:419.95px;height:12.8px;line-height:12.8px">188</div>
<div class="cl" style="top:419.95px;height:12.8px;line-height:12.8px">        <i class="p">}</i></div>
<div class="ln" style="top:432.75px;height:12.8px;line-height:12.8px">189</div>
<div class="cl" style="top:432.75px;height:12.8px;line-height:12.8px">        <i class="c">ArrayList</i><i class="o">&lt;</i><i class="c">String</i><i class="o">&gt;</i> divideMessage <i class="o">=</i> smsManager.divideMessage<i class="p">(</i>str2<i class="p">)</i>;</div>
<div class="ln" style="top:445.55px;height:12.8px;line-height:12.8px">190</div>
<div class="cl" style="top:445.55px;height:12.8px;line-height:12.8px">        <i class="c">ArrayList</i><i class="o">&lt;</i>PendingIntent<i class="o">&gt;</i> arrayList <i class="o">=</i> <b class="k">new</b> <i class="c">ArrayList</i><i class="o">&lt;</i><i class="o">&gt;</i><i class="p">(</i><i class="p">)</i>;</div>
<div class="ln" style="top:458.35px;height:12.8px;line-height:12.8px">191</div>
<div class="cl" style="top:458.35px;height:12.8px;line-height:12.8px">        <b class="k">for</b> <i class="p">(</i><b class="t">int</b> i2 <i class="o">=</i> <i class="n">0</i>; i2 <i class="o">&lt;</i> divideMessage.size<i class="p">(</i><i class="p">)</i>; i2<i class="o">++</i><i class="p">)</i> <i class="p">{</i></div>
<div class="ln" style="top:471.15px;height:12.8px;line-height:12.8px">192</div>
<div class="cl" style="top:471.15px;height:12.8px;line-height:12.8px">            arrayList.add<i class="p">(</i>broadcast<i class="p">)</i>;</div>
<div class="ln" style="top:483.95px;height:12.8px;line-height:12.8px">193</div>
<div class="cl" style="top:483.95px;height:12.8px;line-height:12.8px">        <i class="p">}</i></div>
<div class="ln" style="top:496.75px;height:12.8px;line-height:12.8px">194</div>
<div class="cl" style="top:496.75px;height:12.8px;line-height:12.8px">        smsManager.sendMultipartTextMessage<i class="p">(</i>str, <b class="k">null</b>, divideMessage, arrayList, <b class="k">null</b><i class="p">)</i>;</div>
<div class="ln" style="top:509.55px;height:12.8px;line-height:12.8px">195</div>
<div class="cl" style="top:509.55px;height:12.8px;line-height:12.8px">        <b class="k">return</b> <b class="k">true</b>;</div>
<div class="ln" style="top:522.35px;height:12.8px;line-height:12.8px">196</div>
<div class="cl" style="top:522.35px;height:12.8px;line-height:12.8px">    <i class="p">}</i></div>
<div class="ln" style="top:535.15px;height:12.8px;line-height:12.8px">197</div>
<div class="ln" style="top:547.95px;height:12.8px;line-height:12.8px">198</div>
<div class="cl" style="top:547.95px;height:12.8px;line-height:12.8px">    <b class="k">public</b> <b class="k">static</b> <b class="k">void</b> setDefault<i class="p">(</i>Context context<i class="p">)</i> <i class="p">{</i></div>
<div class="ln" style="top:560.75px;height:12.8px;line-height:12.8px">199</div>
<div class="cl" style="top:560.75px;height:12.8px;line-height:12.8px">        Intent intent <i class="o">=</i> <b class="k">new</b> Intent<i class="p">(</i><i class="s">"android.provider.Telephony.ACTION_CHANGE_DEFAULT"</i><i class="p">)</i>;</div>
</div>
<div class="abs" style="left:1268px;top:76px;width:9px;height:579px;background:#262827"></div>
<div class="abs" style="left:1277px;top:76px;width:1px;height:579px;background:#2c5875"></div>
<div class="abs" style="left:1269px;top:487px;width:7px;height:114.500px;border-radius:3.500px;background:#5b5e5f"></div>
<div class="abs" style="left:218px;top:646px;width:1050px;height:9px;background:#262525"></div>
<div class="abs" style="left:218px;top:655px;width:1060px;height:1px;background:#1f3d50"></div>
<div class="abs" style="left:247.400px;top:648px;width:923px;height:6px;border-radius:3px;background:#5a5859"></div>
<div class="abs" style="left:216px;top:657.700px;width:38.500px;height:2.700px;background:#0a84e0"></div>
<div class="btab" style="left:226px">코드</div>
<div class="btab lat" style="left:264.3px">Smali</div>
<div class="btab lat" style="left:307px">Simple</div>
<div class="btab lat" style="left:356px">Fallback</div>
<div class="abs" style="left:443px;top:666px;width:10.500px;height:10.500px;border-radius:2.500px;background:#4a4a4a"></div>
<div class="btab" style="left:459px;letter-spacing:-0.300px">Split view</div>
<div class="btab" style="left:4px;top:667.500px">이슈:</div>
<svg class="abs" style="left:155px;top:668px" width="12" height="11" viewBox="0 0 12 11"><path d="M6 0.400L11.700 10.600H0.300z" fill="#f0b428"/><path d="M6 3.800v3.400M6 8.300v1.300" stroke="#1f1f1f" stroke-width="1.300"/></svg>
<div class="btab" style="left:171px;top:667.500px">경고 1개</div>
<svg class="abs" style="left:0;top:520px;pointer-events:none;text-rendering:auto" width="640" height="159" viewBox="0 520 640 159">
<defs><filter id="ol" x="-30%" y="-30%" width="160%" height="160%" color-interpolation-filters="sRGB"><feGaussianBlur in="SourceAlpha" stdDeviation="1.500" result="b"/><feComponentTransfer in="b" result="t"><feFuncA type="linear" slope="12" intercept="-0.900"/></feComponentTransfer><feFlood flood-color="#05050f" result="c"/><feComposite in="c" in2="t" operator="in" result="o"/><feMerge><feMergeNode in="o"/><feMergeNode in="SourceGraphic"/></feMerge></filter><filter id="halo1" x="-5%" y="-20%" width="110%" height="140%" color-interpolation-filters="sRGB"><feGaussianBlur in="SourceAlpha" stdDeviation="1.600" result="b"/><feComponentTransfer in="b" result="t"><feFuncA type="linear" slope="12" intercept="-0.900"/></feComponentTransfer><feFlood flood-color="#ffffff" result="c"/><feComposite in="c" in2="t" operator="in" result="h"/><feMerge><feMergeNode in="h"/><feMergeNode in="SourceGraphic"/></feMerge></filter></defs>
<g opacity="0.66" filter="url(#halo1)" font-family="'Liberation Sans', 'Noto Sans CJK KR', sans-serif" font-size="34.6" font-weight="400" font-style="normal" stroke-linejoin="round" stroke="#6d84e8" stroke-width="0.7" fill="#6d84e8"><text filter="url(#ol)" transform="translate(156.40 582.0) scale(1.0 1.13)">꿈</text><text filter="url(#ol)" transform="translate(193.10 582.0) scale(1.0 1.13)">을 </text><text filter="url(#ol)" transform="translate(239.40 582.0) scale(1.0 1.13)">꾸</text><text filter="url(#ol)" transform="translate(275.30 582.0) scale(1.0 1.13)">는</text><text filter="url(#ol)" transform="translate(312.40 582.0) scale(1.0 1.13)">파</text><text filter="url(#ol)" transform="translate(348.40 582.0) scale(1.0 1.13)">랑</text><text filter="url(#ol)" transform="translate(386.40 582.0) scale(1.0 1.13)">새</text></g>
<g opacity="0.66" filter="url(#halo1)" font-family="'DejaVu Sans', sans-serif" font-size="38.4" font-weight="bold" font-style="normal" stroke-linejoin="round" stroke="#6d84e8" stroke-width="2.2" fill="#6d84e8"><text filter="url(#ol)" transform="translate(114.30 629.6) scale(0.78 1) skewX(-7)">w</text><text filter="url(#ol)" transform="translate(139.60 629.6) scale(0.78 1) skewX(-7)">e</text><text filter="url(#ol)" transform="translate(162.60 629.6) scale(0.78 1) skewX(-7)">z</text><text filter="url(#ol)" transform="translate(182.60 629.6) scale(0.78 1) skewX(-7)">a</text><text filter="url(#ol)" transform="translate(203.60 629.6) scale(0.78 1) skewX(-7)">r</text><text filter="url(#ol)" transform="translate(219.10 629.6) scale(0.78 1) skewX(-7)">d</text><text filter="url(#ol)" transform="translate(241.60 629.6) scale(0.78 1) skewX(-7)">4</text><text filter="url(#ol)" transform="translate(262.60 629.6) scale(0.78 1) skewX(-7)">u</text><text filter="url(#ol)" transform="translate(279.60 629.6) scale(0.78 1) skewX(-7)">.</text><text filter="url(#ol)" transform="translate(285.60 629.6) scale(0.78 1) skewX(-7)">t</text><text filter="url(#ol)" transform="translate(295.60 629.6) scale(0.78 1) skewX(-7)">i</text><text filter="url(#ol)" transform="translate(304.60 629.6) scale(0.78 1) skewX(-7)">s</text><text filter="url(#ol)" transform="translate(319.60 629.6) scale(0.78 1) skewX(-7)">t</text><text filter="url(#ol)" transform="translate(333.60 629.6) scale(0.78 1) skewX(-7)">o</text><text filter="url(#ol)" transform="translate(353.60 629.6) scale(0.78 1) skewX(-7)">r</text><text filter="url(#ol)" transform="translate(365.60 629.6) scale(0.78 1) skewX(-7)">y</text><text filter="url(#ol)" transform="translate(385.10 629.6) scale(0.78 1) skewX(-7)">.</text><text filter="url(#ol)" transform="translate(391.10 629.6) scale(0.78 1) skewX(-7)">c</text><text filter="url(#ol)" transform="translate(407.60 629.6) scale(0.78 1) skewX(-7)">o</text><text filter="url(#ol)" transform="translate(425.10 629.6) scale(0.78 1) skewX(-7)">m</text></g>
</svg>
</div>
</body></html>
